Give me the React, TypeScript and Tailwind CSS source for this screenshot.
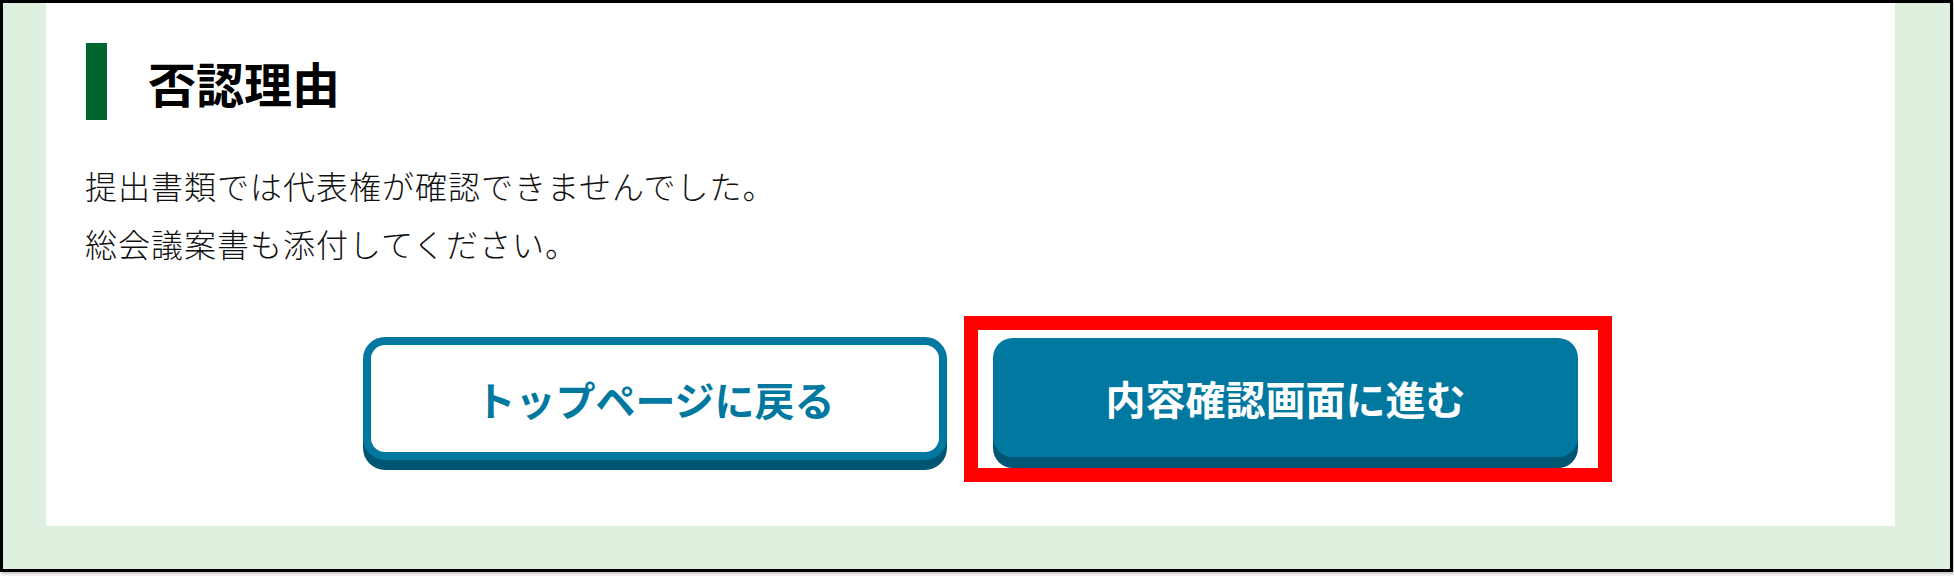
import React from "react";

const jp = "font-['Meiryo','Noto_Sans_CJK_JP','Noto_Sans',sans-serif]";

export default function App() {
  return (
    <div className={`w-[1954px] h-[580px] bg-white ${jp}`}>
      {/* 外枠 */}
      <div className="w-[1953px] h-[572px] border-[3px] border-black bg-[#dfefdd] shadow-[1px_2px_3px_rgba(0,0,0,0.25)]">
        {/* 白パネル */}
        <div className="ml-[43px] w-[1849px] h-[523px] bg-white pt-[40px]">
          {/* 見出し */}
          <div className="flex items-center pl-[40px]">
            <div className="w-[21px] h-[77px] bg-[#00662f]" />
            <h2 className="ml-[41px] text-[48px] leading-none font-bold text-black">
              否認理由
            </h2>
          </div>

          {/* 本文 */}
          <div className="mt-[36px] pl-[39px] text-[32px] leading-[58px] tracking-[1px] font-light text-[#111]">
            <p>提出書類では代表権が確認できませんでした。</p>
            <p>総会議案書も添付してください。</p>
          </div>

          {/* ボタン */}
          <div className="mt-[65px] flex justify-center items-start gap-[46px]">
            <button
              type="button"
              className="w-[584px] h-[123px] rounded-[22px] border-[8px] border-[#0078a0] bg-white shadow-[0_10px_0_#005572] text-[40px] font-bold text-[#0078a0] leading-none flex items-center justify-center"
            >
              トップページに戻る
            </button>
            <div className="relative mt-[1px]">
              <button
                type="button"
                className="w-[585px] h-[119px] rounded-[20px] bg-[#0078a0] shadow-[0_11px_0_#005572] text-[40px] font-bold text-white leading-none flex items-center justify-center"
              >
                内容確認画面に進む
              </button>
              {/* 強調枠 */}
              <div className="absolute -left-[29px] -right-[34px] -top-[22px] -bottom-[25px] border-[14px] border-[#ff0000] pointer-events-none" />
            </div>
          </div>
        </div>
      </div>
    </div>
  );
}
